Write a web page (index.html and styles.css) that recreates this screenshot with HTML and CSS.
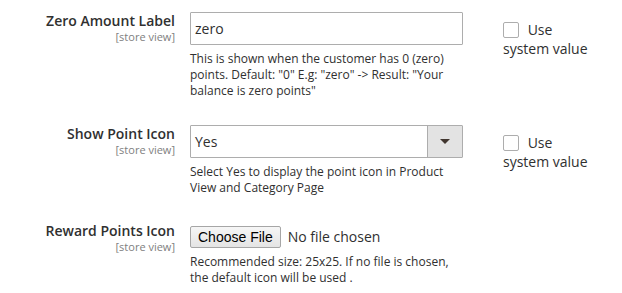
FILE: index.html
```html
<!DOCTYPE html>
<html>
<head>
    <meta charset="UTF-8">
    <link rel="stylesheet" href="styles.css">
</head>
<body>
    <div class="config-form">
        <div class="config-row">
            <div class="config-label">
                <label for="zero-label">Zero Amount Label</label>
                <span class="config-scope">[store view]</span>
            </div>
            <div class="config-control">
                <input id="zero-label" class="config-input" type="text" value="zero">
                <p class="config-note">This is shown when the customer has 0 (zero) points. Default: "0" E.g: "zero" -&gt; Result: "Your balance is zero points"</p>
            </div>
            <label class="config-default">
                <input type="checkbox" class="config-checkbox"> Use system value
            </label>
        </div>

        <div class="config-row">
            <div class="config-label">
                <label for="show-icon">Show Point Icon</label>
                <span class="config-scope">[store view]</span>
            </div>
            <div class="config-control">
                <div class="config-select">
                    <span class="select-value">Yes</span>
                    <span class="select-arrow"></span>
                </div>
                <p class="config-note">Select Yes to display the point icon in Product View and Category Page</p>
            </div>
            <label class="config-default">
                <input type="checkbox" class="config-checkbox"> Use system value
            </label>
        </div>

        <div class="config-row">
            <div class="config-label">
                <label for="points-icon">Reward Points Icon</label>
                <span class="config-scope">[store view]</span>
            </div>
            <div class="config-control">
                <input id="points-icon" class="config-file" type="file">
                <p class="config-note">Recommended size: 25x25. If no file is chosen, the default icon will be used .</p>
            </div>
            <div class="config-default"></div>
        </div>
    </div>
</body>
</html>
```

FILE: styles.css
```css
body {
    margin: 0;
    background: #ffffff;
    font-family: 'Open Sans', 'Liberation Sans', sans-serif;
    color: #303030;
}
.config-form {
    padding-top: 12px;
}
.config-row {
    display: grid;
    grid-template-columns: 175px 273px 117px;
    column-gap: 15px;
    margin-bottom: 26px;
}
.config-row:last-child {
    margin-bottom: 0;
}
.config-label {
    text-align: right;
    display: flex;
    flex-direction: column;
    align-items: flex-end;
}
.config-label label {
    font-size: 14px;
    font-weight: 600;
    line-height: 18px;
}
.config-scope {
    font-size: 11px;
    line-height: 14px;
    color: #808080;
}
.config-input {
    box-sizing: border-box;
    display: block;
    width: 273px;
    height: 33px;
    margin: 0;
    padding: 0 4px;
    border: 1px solid #adadad;
    border-radius: 1px;
    font-family: 'Open Sans', sans-serif;
    font-size: 14px;
    color: #303030;
}
.config-select {
    box-sizing: border-box;
    display: flex;
    width: 273px;
    height: 33px;
    border: 1px solid #adadad;
    border-radius: 1px;
}
.select-value {
    flex: 1;
    padding-left: 4px;
    font-size: 14px;
    line-height: 31px;
}
.select-arrow {
    width: 34px;
    background: #e3e3e3;
    border-left: 1px solid #adadad;
    display: flex;
    align-items: center;
    justify-content: center;
}
.select-arrow::after {
    content: "";
    border-left: 5px solid transparent;
    border-right: 5px solid transparent;
    border-top: 5px solid #41362f;
}
.config-note {
    margin: 6px 0 0;
    font-size: 12px;
    line-height: 16px;
    color: #303030;
}
.config-file {
    display: block;
    margin: 4px 0 0;
    height: 22px;
    font-family: 'Open Sans', sans-serif;
    font-size: 14px;
    color: #303030;
}
.config-file::file-selector-button {
    font-family: 'Liberation Sans', Arial, sans-serif;
    font-size: 14px;
    color: #000000;
    height: 22px;
    padding: 0 7px;
    margin-right: 7px;
    border: 1px solid #a6a6a6;
    border-radius: 2px;
    background: linear-gradient(#f6f6f6, #e4e4e4);
}
.config-default {
    display: block;
    box-sizing: border-box;
    width: 117px;
    padding-top: 8px;
    padding-left: 25px;
    font-size: 14px;
    line-height: 19px;
    color: #303030;
}
.config-checkbox {
    appearance: none;
    box-sizing: border-box;
    width: 16px;
    height: 16px;
    margin: 0 5px 0 0;
    border: 1px solid #adadad;
    border-radius: 2px;
    background: #ffffff;
    vertical-align: -3px;
}
```
